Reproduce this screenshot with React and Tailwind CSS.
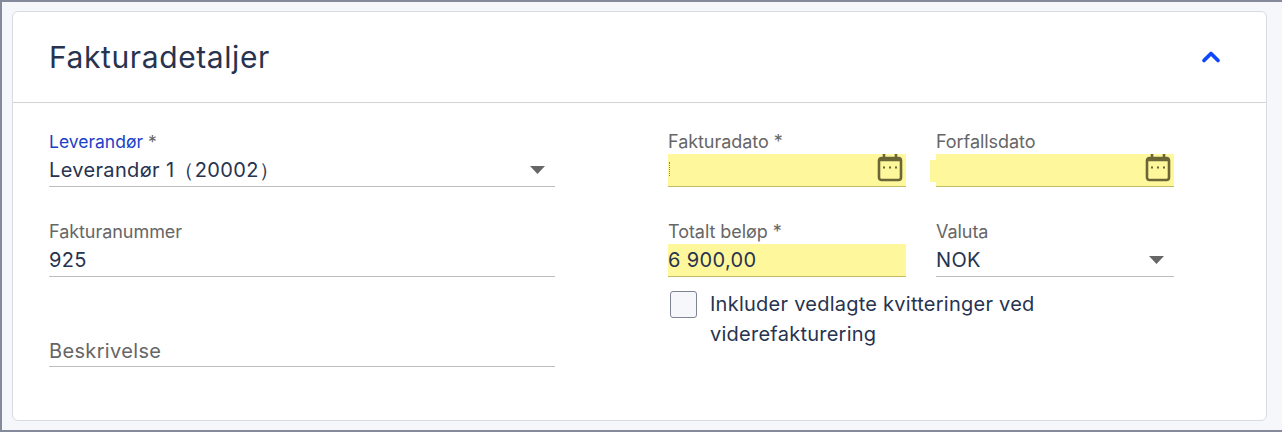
import { ChevronUp } from "lucide-react"

const font = "font-['Inter','Noto_Sans',sans-serif]"

function CalendarIcon() {
    return (
        <svg width="26" height="30" viewBox="0 0 26 30" fill="none" stroke="#6b6636" strokeWidth="2.6" className="absolute right-[3px] top-[-1px]">
            <rect x="2" y="5" width="22" height="22" rx="2.5" />
            <path d="M7 1v4M19 1v4M2 7h22" />
            <path d="M6 14.5h2M12 14.5h2M18 14.5h2" strokeWidth="2" />
        </svg>
    )
}

function Caret() {
    return (
        <svg width="15" height="8" viewBox="0 0 15 8" className="absolute right-[10px] top-[12px]">
            <path d="M0 0h15L7.5 8z" fill="#666666" />
        </svg>
    )
}

function Field({ label, value, highlight, active, children, className = "" }) {
    return (
        <div className={`h-[55px] flex flex-col ${className}`}>
            <div className={`h-[22px] leading-[20px] text-[#666666] ${active ? "text-[17.5px]" : "text-[18px] tracking-[-0.05px]"}`}>
                {active ? <span className="text-[#1a3fc9]">{label}</span> : label}
                {active && " *"}
            </div>
            <div
                className={`relative h-[33px] border-b text-[20px] leading-[32px] tracking-[0.35px] text-[#27334f] ${
                    highlight ? "bg-[#fff79c] border-[#c2bb63]" : "border-[#bdbdbd]"
                }`}
            >
                {value}
                {children}
            </div>
        </div>
    )
}

export default function App() {
    return (
        <div className={`h-[432px] w-[1282px] overflow-hidden border-2 border-b-2 border-r-0 border-[#848a9b] bg-[#f5f7fb] pl-[10px] pt-[9px] ${font}`}>
            <div className="h-[410px] w-[1255px] rounded-[6px] border border-[#d9dbe0] bg-white">
                <div className="flex h-[91px] items-center justify-between border-b border-[#d2d3d6] pl-[36px] pr-[41px] pb-[1px]">
                    <h2 className="text-[30px] leading-[36px] tracking-[0.6px] text-[#27334f]">Fakturadetaljer</h2>
                    <ChevronUp size={28} strokeWidth={3.2} className="text-[#0f47ff]" />
                </div>
                <div className="flex pl-[36px] pt-[29px]">
                    <div className="flex w-[506px] flex-col gap-[35px]">
                        <Field label="Leverandør" value="Leverandør 1（20002）" active>
                            <Caret />
                        </Field>
                        <Field label="Fakturanummer" value="925" />
                        <Field label="" value="" className="relative">
                            <span className="absolute left-0 top-[5px] text-[20px] leading-[24px] text-[#666666]">Beskrivelse</span>
                        </Field>
                    </div>
                    <div className="ml-[113px] flex w-[506px] flex-col gap-[35px]">
                        <div className="flex gap-[30px]">
                            <Field label="Fakturadato *" highlight className="w-[238px]">
                                <CalendarIcon />
                                <span className="absolute left-[1px] top-[8px] h-[14px] w-px border-l border-dotted border-[#8a8650]" />
                            </Field>
                            <Field label="Forfallsdato" highlight className="w-[238px]">
                                <CalendarIcon />
                                <span className="absolute left-[-6px] top-[6px] h-[22px] w-[6px] bg-[#fff79c]" />
                            </Field>
                        </div>
                        <div className="flex flex-col gap-[16px]">
                            <div className="flex gap-[30px]">
                                <Field label="Totalt beløp *" value="6 900,00" highlight className="w-[238px]" />
                                <Field label="Valuta" value="NOK" className="w-[238px]">
                                    <Caret />
                                </Field>
                            </div>
                            <label className="flex items-start gap-[13px] pl-[2px]">
                                <span className="mt-[-2px] h-[27px] w-[27px] shrink-0 rounded-[3px] border border-[#7e8494] bg-[#f5f7fb]" />
                                <span className="mt-[-4px] w-[345px] text-[20px] leading-[30px] tracking-[0.25px] text-[#27334f]">Inkluder vedlagte kvitteringer ved viderefakturering</span>
                            </label>
                        </div>
                    </div>
                </div>
            </div>
        </div>
    )
}
